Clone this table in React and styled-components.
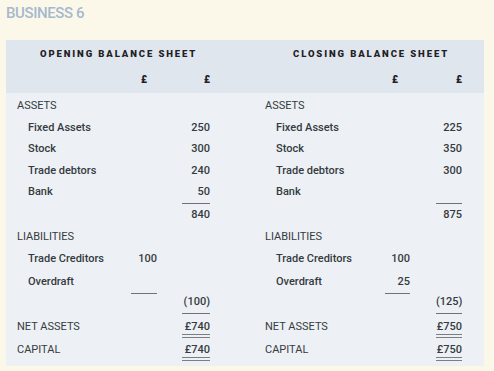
import React from 'react';
import styled, { createGlobalStyle } from 'styled-components';

const GlobalStyle = createGlobalStyle`
  html, body {
    margin: 0;
    padding: 0;
    background: #fbf8ea;
  }
  body {
    font-family: Roboto, "Liberation Sans", sans-serif;
    color: #353b40;
  }
`;

const Page = styled.div`
  width: 494px;
  height: 371px;
  padding: 2px 10px 0 6px;
  box-sizing: border-box;
`;

const Title = styled.div`
  font-size: 15px;
  font-weight: 500;
  color: #a6b9cd;
  height: 38px;
  line-height: 22px;
  letter-spacing: -0.4px;
`;

const Panel = styled.div`
  width: 478px;
  background: #edf1f5;
`;

const HeadBand = styled.div`
  display: grid;
  grid-template-columns: 239px 239px;
  height: 53px;
  background: #dfe6ee;
`;

const Half = styled.div`
  display: grid;
  grid-template-columns: 1fr ${p => p.$c1}px ${p => p.$c2}px;
  column-gap: ${p => p.$gap}px;
  padding: 0 ${p => p.$pr}px 0 ${p => p.$pl}px;
  align-content: start;
`;

const SheetTitle = styled.div`
  grid-column: 1 / -1;
  height: 26px;
  line-height: 26px;
  padding-left: ${p => p.$indent}px;
  font-size: 9.5px;
  font-weight: 900;
  letter-spacing: 1.9px;
  color: #1f2124;
  white-space: nowrap;
  padding-top: 1px;
`;

const Pound = styled.div`
  height: 26px;
  line-height: 26px;
  font-size: 10px;
  font-weight: 900;
  color: #1f2124;
  text-align: right;
  padding-right: ${p => p.$pr || 0}px;
`;

const Body = styled.div`
  display: grid;
  grid-template-columns: 239px 239px;
  padding: 1.5px 0 0;
  height: 273px;
  box-sizing: border-box;
`;

const Row = styled.div`
  display: contents;
`;

const Label = styled.div`
  height: ${p => p.$h}px;
  padding: 4px 0 0 ${p => (p.$sub ? 11 : 0)}px;
  box-sizing: border-box;
  font-size: 11px;
  line-height: 13px;
  font-weight: ${p => (p.$sub ? 500 : 400)};
  white-space: nowrap;
`;

const Cell = styled.div`
  height: ${p => p.$h}px;
  padding-top: 4px;
  box-sizing: border-box;
`;

const Amount = styled.div`
  text-align: right;
  font-size: 11px;
  font-weight: 500;
  line-height: 13px;
  min-height: 13px;
  ${p => p.$rule === 'single' && `
    border-bottom: 1px solid #6f7377;
    padding-bottom: 5px;
  `}
  ${p => p.$rule === 'double' && `
    border-bottom: 4px double #7a7e83;
    padding-bottom: 1px;
  `}
`;

const layouts = {
  left: { pl: 11, pr: 35, c1: 26, c2: 28, gap: 25, indent: 23, p1: 10 },
  right: { pl: 20, pr: 22, c1: 25, c2: 26, gap: 26, indent: 28, p1: 12 },
};

// distance from one row's text to the next, as in the printed layout
const heights = [22, 21, 22, 21, 23, 22, 22, 23, 20, 25, 23, 27];

const sheets = [
  {
    side: 'left',
    title: 'OPENING BALANCE SHEET',
    rows: [
      { label: 'ASSETS' },
      { label: 'Fixed Assets', sub: true, b: '250' },
      { label: 'Stock', sub: true, b: '300' },
      { label: 'Trade debtors', sub: true, b: '240' },
      { label: 'Bank', sub: true, b: '50', rb: 'single' },
      { label: '', b: '840' },
      { label: 'LIABILITIES' },
      { label: 'Trade Creditors', sub: true, a: '100' },
      { label: 'Overdraft', sub: true, a: '', ra: 'single' },
      { label: '', b: '(100)', rb: 'single' },
      { label: 'NET ASSETS', b: '£740', rb: 'double' },
      { label: 'CAPITAL', b: '£740', rb: 'double' },
    ],
  },
  {
    side: 'right',
    title: 'CLOSING BALANCE SHEET',
    rows: [
      { label: 'ASSETS' },
      { label: 'Fixed Assets', sub: true, b: '225' },
      { label: 'Stock', sub: true, b: '350' },
      { label: 'Trade debtors', sub: true, b: '300' },
      { label: 'Bank', sub: true, b: '', rb: 'single' },
      { label: '', b: '875' },
      { label: 'LIABILITIES' },
      { label: 'Trade Creditors', sub: true, a: '100' },
      { label: 'Overdraft', sub: true, a: '25', ra: 'single' },
      { label: '', b: '(125)', rb: 'single' },
      { label: 'NET ASSETS', b: '£750', rb: 'double' },
      { label: 'CAPITAL', b: '£750', rb: 'double' },
    ],
  },
];

function SheetHead({ sheet }) {
  const l = layouts[sheet.side];
  return (
    <Half $pl={l.pl} $pr={l.pr} $c1={l.c1} $c2={l.c2} $gap={l.gap}>
      <SheetTitle $indent={l.indent}>{sheet.title}</SheetTitle>
      <div />
      <Pound $pr={l.p1}>£</Pound>
      <Pound>£</Pound>
    </Half>
  );
}

function SheetBody({ sheet }) {
  const l = layouts[sheet.side];
  return (
    <Half $pl={l.pl} $pr={l.pr} $c1={l.c1} $c2={l.c2} $gap={l.gap}>
      {sheet.rows.map((r, i) => (
        <Row key={i}>
          <Label $h={heights[i]} $sub={r.sub}>{r.label}</Label>
          <Cell $h={heights[i]}>{r.a !== undefined && <Amount $rule={r.ra}>{r.a}</Amount>}</Cell>
          <Cell $h={heights[i]}>{r.b !== undefined && <Amount $rule={r.rb}>{r.b}</Amount>}</Cell>
        </Row>
      ))}
    </Half>
  );
}

export default function App() {
  return (
    <Page>
      <GlobalStyle />
      <Title>BUSINESS 6</Title>
      <Panel>
        <HeadBand>
          {sheets.map(s => <SheetHead key={s.side} sheet={s} />)}
        </HeadBand>
        <Body>
          {sheets.map(s => <SheetBody key={s.side} sheet={s} />)}
        </Body>
      </Panel>
    </Page>
  );
}
